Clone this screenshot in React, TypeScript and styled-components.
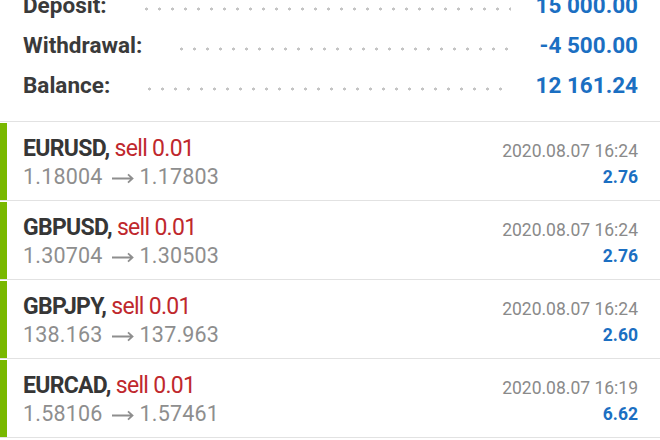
import React from 'react';
import styled, { createGlobalStyle } from 'styled-components';

const GlobalStyle = createGlobalStyle`
  html, body {
    margin: 0;
    padding: 0;
    background: #ffffff;
    overflow: hidden;
  }
  body {
    font-family: 'Roboto', 'Liberation Sans', sans-serif;
  }
`;

const Screen = styled.div`
  width: 660px;
  height: 440px;
  overflow: hidden;
  background: #ffffff;
`;

const Summary = styled.div`
  margin-top: -15px;
  padding: 0 22px 16px 23px;
  border-bottom: 1px solid #e2e2e2;
`;

const SummaryRow = styled.div`
  display: flex;
  align-items: center;
  height: 40px;
`;

const Label = styled.div`
  font-size: 22.5px;
  font-weight: 700;
  color: #3a3a3a;
  white-space: nowrap;
`;

const Leader = styled.div`
  flex: 1;
  height: 4px;
  margin: 8px 25px 0 33px;
  background-image: radial-gradient(circle, #c4c4c4 1.3px, transparent 1.8px);
  background-size: 13px 4px;
  background-repeat: repeat-x;
`;

const Amount = styled.div`
  font-size: 22.5px;
  font-weight: 700;
  color: #1b6fc2;
  white-space: nowrap;
`;

const TradeList = styled.div`
  display: flex;
  flex-direction: column;
`;

const Trade = styled.div`
  display: flex;
  height: 78px;
  border-bottom: 1px solid #e2e2e2;
`;

const SideBar = styled.div`
  width: 7px;
  background: #79b800;
  margin-top: 1px;
`;

const TradeMain = styled.div`
  flex: 1;
  padding: 13px 0 0 16px;
  font-size: 23px;
  line-height: 28px;
  letter-spacing: -0.7px;
`;

const Symbol = styled.span`
  font-weight: 700;
  color: #363636;
`;

const Side = styled.span`
  color: #bf282d;
`;

const Prices = styled.div`
  display: flex;
  align-items: center;
  font-size: 21.5px;
  color: #8e8e8e;
  letter-spacing: 0.2px;
`;

const ArrowIcon = styled.svg`
  width: 23px;
  height: 12px;
  margin: 2px 6px 0 8px;
  flex-shrink: 0;
`;

const TradeSide = styled.div`
  padding: 16px 22px 0 0;
  text-align: right;
  font-size: 17.5px;
  line-height: 26px;
`;

const Time = styled.div`
  color: #8a8a8a;
`;

const Profit = styled.div`
  font-weight: 700;
  color: #1b6fc2;
`;

const Arrow = () => (
  <ArrowIcon viewBox="0 0 23 12">
    <path d="M1 6.5H21.5M17 2.3L21.5 6.5L17 10.7" fill="none" stroke="#8e8e8e" strokeWidth="1.8" />
  </ArrowIcon>
);

const summary = [
  { label: 'Deposit:', value: '15 000.00' },
  { label: 'Withdrawal:', value: '-4 500.00' },
  { label: 'Balance:', value: '12 161.24' },
];

const trades = [
  { symbol: 'EURUSD', open: '1.18004', close: '1.17803', time: '2020.08.07 16:24', profit: '2.76' },
  { symbol: 'GBPUSD', open: '1.30704', close: '1.30503', time: '2020.08.07 16:24', profit: '2.76' },
  { symbol: 'GBPJPY', open: '138.163', close: '137.963', time: '2020.08.07 16:24', profit: '2.60' },
  { symbol: 'EURCAD', open: '1.58106', close: '1.57461', time: '2020.08.07 16:19', profit: '6.62' },
];

export default function App() {
  return (
    <Screen>
      <GlobalStyle />
      <Summary>
        {summary.map(row => (
          <SummaryRow key={row.label}>
            <Label>{row.label}</Label>
            <Leader />
            <Amount>{row.value}</Amount>
          </SummaryRow>
        ))}
      </Summary>
      <TradeList>
        {trades.map((t, i) => (
          <Trade key={i}>
            <SideBar />
            <TradeMain>
              <div>
                <Symbol>{t.symbol},</Symbol> <Side>sell 0.01</Side>
              </div>
              <Prices>
                <span>{t.open}</span>
                <Arrow />
                <span>{t.close}</span>
              </Prices>
            </TradeMain>
            <TradeSide>
              <Time>{t.time}</Time>
              <Profit>{t.profit}</Profit>
            </TradeSide>
          </Trade>
        ))}
      </TradeList>
    </Screen>
  );
}
